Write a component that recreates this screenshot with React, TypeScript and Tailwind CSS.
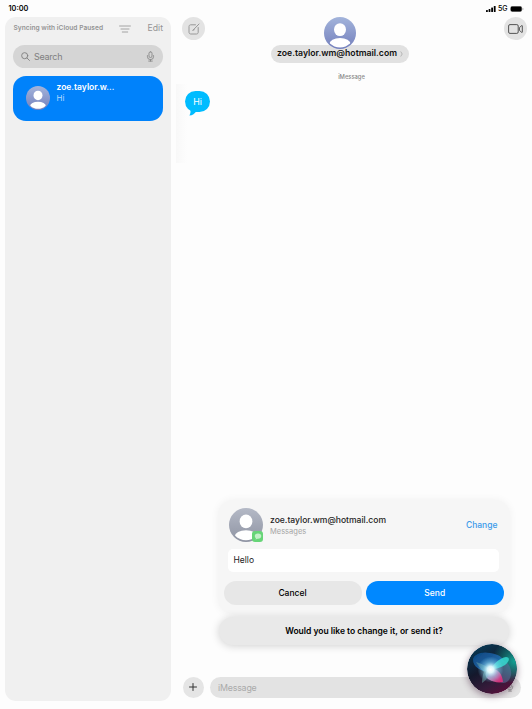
import React from 'react';

const PERSON_TONES = {
  blue: ['#a3b4db', '#7480bd'],
  gray: ['#b4b9c6', '#8f94a3'],
};

function Avatar({ id, tone, className }: { id: string; tone: 'blue' | 'gray'; className: string }) {
  const [top, bottom] = PERSON_TONES[tone];
  return (
    <svg viewBox="0 0 32 32" className={className}>
      <defs>
        <linearGradient id={id} x1="0" y1="0" x2="0" y2="1">
          <stop offset="0" stopColor={top} />
          <stop offset="1" stopColor={bottom} />
        </linearGradient>
        <clipPath id={`${id}-clip`}>
          <circle cx="16" cy="16" r="14.4" />
        </clipPath>
      </defs>
      <circle cx="16" cy="16" r="16" fill={`url(#${id})`} />
      <ellipse cx="16" cy="12.6" rx="6" ry="6.4" fill="#fff" />
      <ellipse cx="16" cy="26.8" rx="10.6" ry="5.8" fill="#fff" clipPath={`url(#${id}-clip)`} />
    </svg>
  );
}

function MicIcon({ className }: { className: string }) {
  return (
    <svg viewBox="0 0 10 12" fill="none" stroke="currentColor" strokeWidth="0.9" strokeLinecap="round" className={className}>
      <rect x="3.3" y="0.8" width="3.4" height="6.4" rx="1.7" />
      <path d="M1.6 5v1.1a3.4 3.4 0 0 0 6.8 0V5M5 9.5v1.6M3 11.1h4" />
    </svg>
  );
}

function StatusBar() {
  return (
    <div className="flex h-[17px] shrink-0 items-center justify-between pl-[8.5px] pr-[8px] leading-none text-black">
      <span className="text-[7.3px] font-semibold">10:00</span>
      <div className="flex items-center">
        <svg viewBox="0 0 10 6" className="h-[6px] w-[10px]">
          <rect x="0" y="4" width="1.8" height="2" rx="0.5" />
          <rect x="2.6" y="3" width="1.8" height="3" rx="0.5" />
          <rect x="5.2" y="1.6" width="1.8" height="4.4" rx="0.5" />
          <rect x="7.8" y="0" width="1.8" height="6" rx="0.5" />
        </svg>
        <span className="ml-[2px] w-[10px] text-[7px] font-medium">5G</span>
        <svg viewBox="0 0 14 6" className="ml-[2px] h-[6px] w-[14px]">
          <rect x="0.2" y="0.2" width="12" height="5.6" rx="1.8" fill="#999" />
          <rect x="0.8" y="0.6" width="10.8" height="4.8" rx="1.3" />
          <path d="M12.7 2v2c1-.4 1-1.6 0-2Z" fill="#777" />
        </svg>
      </div>
    </div>
  );
}

function Sidebar() {
  return (
    <aside className="ml-[5px] h-[684px] w-[166px] shrink-0 rounded-[11px] bg-[#f0f0f0] px-[8px]">
      <div className="flex h-[23px] items-center text-[#949494]">
        <span className="w-[106px] whitespace-nowrap pl-[0.5px] text-[6.6px] font-semibold tracking-[0.005em]">Syncing with iCloud Paused</span>
        <svg viewBox="0 0 12 8" className="h-[8px] w-[12px]" stroke="#9a9a9a" strokeWidth="0.9" strokeLinecap="round">
          <path d="M0.6 1h10.8M2 4h8M3.3 7h5.4" />
        </svg>
        <span className="ml-auto text-[8.7px]">Edit</span>
      </div>
      <div className="mt-[5px] flex h-[23px] items-center rounded-full bg-[#d5d5d5] pl-[8px] pr-[8px] text-[#7f7f7f]">
        <svg viewBox="0 0 10 10" className="h-[9px] w-[9px]" fill="none" stroke="currentColor" strokeWidth="1" strokeLinecap="round">
          <circle cx="4.1" cy="4.1" r="3.4" />
          <path d="m6.7 6.7 2.7 2.7" />
        </svg>
        <span className="ml-[4px] text-[9px] tracking-[-0.03em]">Search</span>
        <MicIcon className="ml-auto h-[11px] w-[9px]" />
      </div>
      <div className="mt-[8px] flex h-[45px] rounded-[13px] bg-[#0082fb] pl-[13px] pt-[5px]">
        <Avatar id="row-avatar" tone="blue" className="mt-[5px] h-[24px] w-[24px]" />
        <div className="ml-[6.5px] text-white">
          <p className="text-[8.5px] font-semibold leading-[13px]">zoe.taylor.w…</p>
          <p className="text-[8px] leading-[9px] text-[#b5daff]">Hi</p>
        </div>
      </div>
    </aside>
  );
}

function ConversationHeader() {
  return (
    <header className="flex h-[46px] items-start justify-between pl-[11px] pr-[5px]">
      <div className="flex h-[23px] w-[23px] items-center justify-center rounded-full bg-[#e3e3e3]">
        <svg viewBox="0 0 12 12" className="h-[12px] w-[12px]" fill="none" stroke="#989898" strokeWidth="1" strokeLinecap="round" strokeLinejoin="round">
          <path d="M7.5 1.8H2.7C1.7 1.8 1 2.5 1 3.5v5.8c0 1 .7 1.7 1.7 1.7h5.8c1 0 1.7-.7 1.7-1.7V4.5" />
          <path d="M5 7.2 11 1M5 7.2l1.2-.4" />
        </svg>
      </div>
      <div className="ml-[-29px] flex flex-col items-center">
        <Avatar id="header-avatar" tone="blue" className="z-10 h-[32px] w-[32px]" />
        <div className="mt-[-4px] flex h-[18px] w-[138px] items-center justify-center whitespace-nowrap rounded-full bg-[#e1e1e1] text-[8.7px] font-semibold text-[#111]">
          zoe.taylor.wm@hotmail.com
          <svg viewBox="0 0 3 6" className="ml-[3px] h-[6px] w-[3px]" fill="none" stroke="#aaa" strokeWidth="0.8">
            <path d="M.7.5 2.2 3 .7 5.5" />
          </svg>
        </div>
      </div>
      <div className="flex h-[23px] w-[23px] items-center justify-center rounded-full bg-[#e3e3e3]">
        <svg viewBox="0 0 15 10" className="h-[10px] w-[15px]" fill="none" stroke="#444" strokeWidth="0.9" strokeLinejoin="round">
          <rect x="0.6" y="0.6" width="9.6" height="8.8" rx="1.4" />
          <path d="m11.4 3.8 2.2-2.2c.3-.3.7-.1.7.3v6.2c0 .4-.4.6-.7.3l-2.2-2.2Z" />
        </svg>
      </div>
    </header>
  );
}

function MessageBubble() {
  return (
    <div className="relative ml-[14px] flex h-[21px] w-[25px] items-center justify-center rounded-[10.5px] bg-[#00bcff] text-[8.8px] text-white">
      <svg viewBox="0 0 10 8" className="absolute left-[4px] top-[17px] h-[8px] w-[10px]" fill="#00bcff">
        <path d="M1.3 0C1.8 3.4 1.6 5.6.4 7.6 3.6 7.3 5.8 5.8 7.5 3L9 0Z" />
      </svg>
      <span className="relative">Hi</span>
    </div>
  );
}

function SiriOrb() {
  return (
    <svg viewBox="0 0 50 50" className="absolute left-[467px] top-[644px] h-[50px] w-[50px] rounded-full shadow-[0_2px_7px_rgba(60,20,50,0.45)]">
      <defs>
        <linearGradient id="orb-base" x1="0.2" y1="0" x2="0.75" y2="1">
          <stop offset="0" stopColor="#063b58" />
          <stop offset="0.45" stopColor="#14182c" />
          <stop offset="0.75" stopColor="#351b3a" />
          <stop offset="1" stopColor="#5c0b39" />
        </linearGradient>
        <radialGradient id="orb-rim" cx="0.95" cy="0.34" r="0.45">
          <stop offset="0" stopColor="#12a294" />
          <stop offset="1" stopColor="#12a294" stopOpacity="0" />
        </radialGradient>
        <radialGradient id="orb-glow">
          <stop offset="0" stopColor="#fff" />
          <stop offset="0.25" stopColor="#e2fcff" stopOpacity="0.95" />
          <stop offset="0.6" stopColor="#8cddf5" stopOpacity="0.45" />
          <stop offset="1" stopColor="#7dd3fc" stopOpacity="0" />
        </radialGradient>
        <linearGradient id="orb-blue" x1="0" y1="0" x2="1" y2="1">
          <stop offset="0" stopColor="#0c4887" />
          <stop offset="1" stopColor="#3288d5" />
        </linearGradient>
        <linearGradient id="orb-pink" x1="0" y1="0" x2="1" y2="0.6">
          <stop offset="0" stopColor="#b8c7ea" />
          <stop offset="1" stopColor="#e0307e" />
        </linearGradient>
        <filter id="orb-soft" x="-20%" y="-20%" width="140%" height="140%">
          <feGaussianBlur stdDeviation="0.6" />
        </filter>
      </defs>
      <circle cx="25" cy="25" r="25" fill="url(#orb-base)" />
      <circle cx="25" cy="25" r="25" fill="url(#orb-rim)" />
      <g filter="url(#orb-soft)">
        <path d="M24 28C13 28 6 22 6 16c0-5 8-9 17-7 8 1 13 4 14 9-4 1-8 5-13 10Z" fill="url(#orb-blue)" opacity="0.85" />
        <path d="M34 15c7 2 11 9 10 16-1 5-4 8-8 8-5-1-9-6-13-13 3-5 7-9 11-11Z" fill="#5b6c98" opacity="0.6" />
        <path d="M23 26c4-7 10-12 16-13 4 0 4 4-1 8-5 3-10 4-15 5Z" fill="#35d9d0" opacity="0.85" />
        <path d="M23 25c7-1 12 4 13 13-5 1-10 0-15-3-4-3-3-8 2-10Z" fill="url(#orb-pink)" opacity="0.9" />
        <path d="M23 26c-1 5-3 10-8 13 0-5 1-9 2-11-2-2-5-5-8-10 6 2 11 4 14 8Z" fill="#6ba5a5" opacity="0.5" />
      </g>
      <circle cx="23.5" cy="25.5" r="13" fill="url(#orb-glow)" />
    </svg>
  );
}

function SiriSheet() {
  return (
    <div className="absolute left-[218px] top-[500px] w-[292px] text-black">
      <section className="h-[114px] rounded-[15px] bg-[#f6f6f6] px-[5.5px] pt-[8px] shadow-[0_0_8px_rgba(0,0,0,0.055)]">
        <div className="flex h-[34px] items-center pl-[5.5px] pr-[7px]">
          <div className="relative h-[34px] w-[34px]">
            <Avatar id="sheet-avatar" tone="gray" className="h-[34px] w-[34px]" />
            <div className="absolute bottom-0 right-0 flex h-[11px] w-[11px] items-center justify-center rounded-[3px] bg-[#67d578]">
              <svg viewBox="0 0 10 9" className="h-[7px] w-[8px]" fill="#c4f0c9">
                <ellipse cx="5" cy="4" rx="4.2" ry="3.3" />
                <path d="M2.6 6 1.8 8.2 5 7Z" />
              </svg>
            </div>
          </div>
          <div className="ml-[7px]">
            <p className="whitespace-nowrap text-[8.55px] font-medium leading-[12px] text-[#252525]">zoe.taylor.wm@hotmail.com</p>
            <p className="text-[7.5px] leading-[11px] text-[#a5a5a5]">Messages</p>
          </div>
          <span className="ml-auto text-[8.5px] font-medium text-[#3b9bea]">Change</span>
        </div>
        <div className="ml-[4px] mt-[7px] flex h-[23px] w-[271.5px] items-center rounded-[5px] bg-white pl-[6px] text-[8.5px] text-[#222]">Hello</div>
        <div className="mt-[9px] flex gap-[4px] text-[8.5px] font-medium">
          <button className="h-[24px] w-[138px] rounded-full bg-[#e7e7e7]">Cancel</button>
          <button className="h-[24px] w-[138.5px] rounded-full bg-[#0088ff] text-white">Send</button>
        </div>
      </section>
      <div className="mx-[1px] mt-[3px] flex h-[28px] items-center justify-center rounded-[14px] bg-[#e9e9e9] text-[8.5px] font-semibold shadow-[0_1px_9px_rgba(0,0,0,0.18)]">
        Would you like to change it, or send it?
      </div>
    </div>
  );
}

export default function App() {
  return (
    <div className="relative flex h-[709px] w-[532px] flex-col overflow-hidden bg-[#fdfdfd] font-['Inter',sans-serif]">
      <StatusBar />
      <div className="flex">
        <Sidebar />
        <main className="flex h-[684px] flex-1 flex-col">
          <ConversationHeader />
          <p className="mt-[10px] text-center text-[5.8px] font-medium leading-[8px] text-[#888]">iMessage</p>
          <div className="ml-[5px] mt-[3px] h-[79px] w-[11px] bg-linear-to-r from-[#f8f8f8] to-[#fdfdfd]">
            <div className="ml-[-5px] pt-[7px]">
              <MessageBubble />
            </div>
          </div>
          <div className="mb-[3.5px] ml-[12px] mt-auto flex items-center gap-[6.5px]">
            <div className="flex h-[20.5px] w-[20.5px] items-center justify-center rounded-full bg-[#e5e5e5]">
              <svg viewBox="0 0 8 8" className="h-[8px] w-[8px]" stroke="#333" strokeWidth="1" strokeLinecap="round">
                <path d="M4 .5v7M.5 4h7" />
              </svg>
            </div>
            <div className="flex h-[20.5px] w-[311px] items-center rounded-full bg-[#e3e3e3] pl-[8px] pr-[7px] text-[8.8px] tracking-[-0.02em] text-[#aaa]">
              iMessage
              <MicIcon className="ml-auto h-[10px] w-[8px] text-[#8a8a8a]" />
            </div>
          </div>
        </main>
      </div>
      <SiriSheet />
      <SiriOrb />
    </div>
  );
}
